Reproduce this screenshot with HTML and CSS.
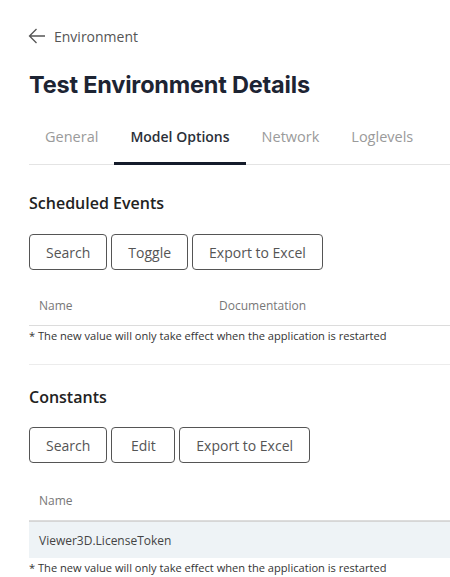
FILE: index.html
```html
<!DOCTYPE html>
<html>
<head>
<meta charset="utf-8">
<link rel="stylesheet" href="styles.css">
</head>
<body>
<div class="page">
  <a class="back">
    <svg class="back-icon" width="18" height="16" viewBox="0 0 18 16"><path d="M17 8H1.5M8.5 1L1.5 8l7 7" fill="none" stroke="#555" stroke-width="1.3"/></svg>
    <span>Environment</span>
  </a>
  <h1 class="title">Test Environment Details</h1>
  <nav class="tabs">
    <span class="tab">General</span>
    <span class="tab active">Model Options</span>
    <span class="tab">Network</span>
    <span class="tab">Loglevels</span>
  </nav>

  <section class="section first">
    <h2 class="section-title">Scheduled Events</h2>
    <div class="toolbar">
      <button class="btn">Search</button>
      <button class="btn">Toggle</button>
      <button class="btn">Export to Excel</button>
    </div>
    <div class="table">
      <div class="thead">
        <span class="col col-name">Name</span>
        <span class="col">Documentation</span>
      </div>
    </div>
    <p class="note">* The new value will only take effect when the application is restarted</p>
  </section>

  <section class="section second">
    <h2 class="section-title">Constants</h2>
    <div class="toolbar">
      <button class="btn">Search</button>
      <button class="btn">Edit</button>
      <button class="btn">Export to Excel</button>
    </div>
    <div class="table">
      <div class="thead">
        <span class="col col-name">Name</span>
      </div>
      <div class="row">
        <span class="col">Viewer3D.LicenseToken</span>
      </div>
    </div>
    <p class="note">* The new value will only take effect when the application is restarted</p>
  </section>
</div>
</body>
</html>
```

FILE: styles.css
```css
* { box-sizing: border-box; }
html, body { margin: 0; padding: 0; background: #fff; }
body {
  font-family: "Open Sans", "Noto Sans", sans-serif;
  color: #333;
  overflow: hidden;
}
.page {
  padding: 26px 0 0 29px;
  width: 470px;
}
.back {
  display: flex;
  align-items: center;
  gap: 8px;
  height: 20px;
  font-size: 14px;
  color: #555;
}
.back-icon { display: block; margin-left: -1px; }
.title {
  margin: 24px 0 0;
  font-family: "Inter", "Open Sans", sans-serif;
  font-weight: 700;
  font-size: 23.5px;
  line-height: 30px;
  color: #1d2433;
  letter-spacing: -0.2px;
}
.tabs {
  display: flex;
  margin-top: 17px;
  border-bottom: 1px solid #e4e4e4;
}
.tab {
  padding: 0 16px;
  height: 48px;
  line-height: 40px;
  font-size: 14.5px;
  color: #9a9a9a;
  border-bottom: 2px solid transparent;
  margin-bottom: -1px;
}
.tab.active {
  color: #2b2f38;
  font-weight: 600;
  font-size: 14px;
  border-bottom: 3px solid #141b2a;
}
.section { padding-top: 26px; }
.section-title {
  margin: 0;
  font-size: 16px;
  font-weight: 600;
  line-height: 24px;
  color: #222;
}
.toolbar {
  display: flex;
  gap: 4px;
  margin-top: 19px;
}
.btn {
  height: 36px;
  min-width: 64px;
  padding: 0 16px;
  border: 1px solid #555;
  border-radius: 4px;
  background: #fff;
  font-family: "Open Sans", sans-serif;
  font-size: 14px;
  color: #555;
}
.table { margin-top: 16px; }
.thead {
  display: flex;
  height: 40px;
  align-items: center;
  border-bottom: 1px solid #dcdcdc;
  font-size: 12px;
  color: #777;
}
.col { padding-left: 10px; }
.col-name { width: 180px; }
.row {
  display: flex;
  align-items: center;
  height: 37px;
  background: #eef3f6;
  border-top: 1px solid #d6d6d6;
  font-size: 12px;
  color: #444;
}
.note {
  margin: 2px 0 0;
  font-size: 11.1px;
  line-height: 16px;
  color: #333;
}
.first {
  padding-bottom: 20px;
  border-bottom: 1px solid #ececec;
}
.second { padding-top: 20px; }
.second .toolbar { margin-top: 18px; }
.second .table { margin-top: 18px; }
```
